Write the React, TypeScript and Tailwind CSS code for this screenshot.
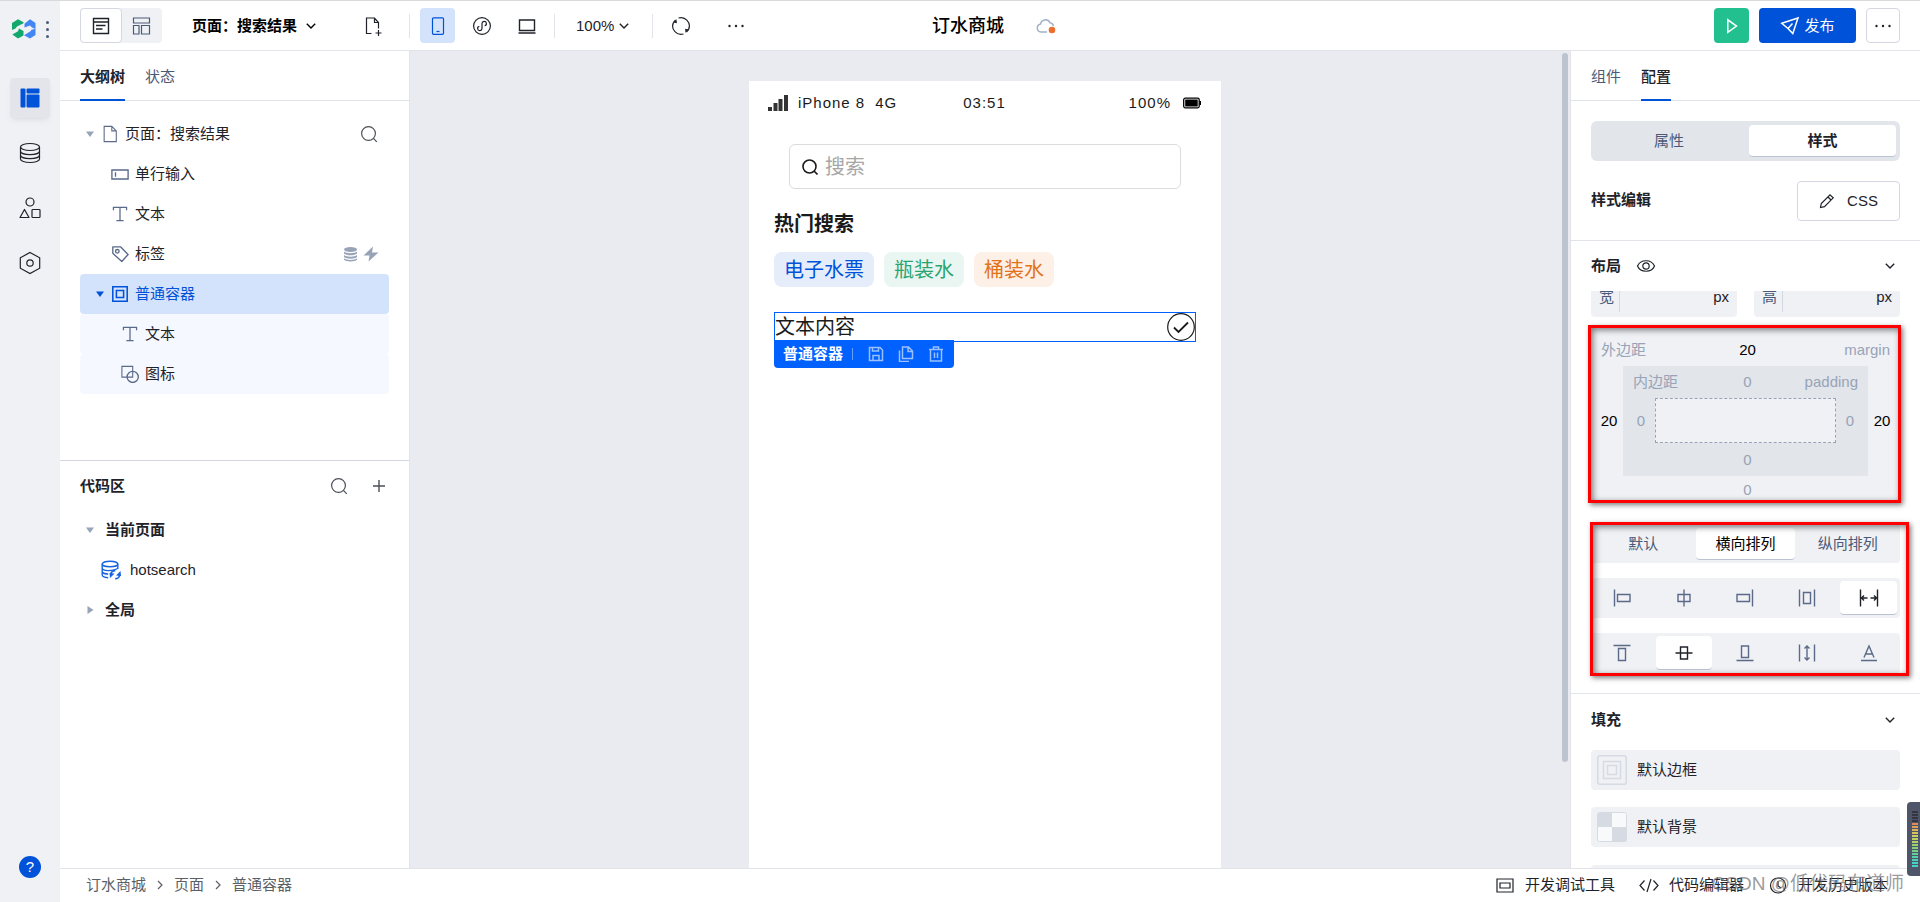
import type { ReactNode } from "react";
import { useState } from "react";

const fontStack =
  "font-['Liberation_Sans','Noto_Sans_CJK_SC',sans-serif] text-[15px] leading-5";
const iconButton = "flex items-center justify-center cursor-pointer";
const divider = "w-px h-6 bg-[#e2e4ea]";

type IconProps = { className?: string };

function Icon({
  className = "w-5 h-5",
  box = 20,
  children,
}: IconProps & { box?: number; children: ReactNode }) {
  return (
    <svg
      className={`shrink-0 ${className}`}
      viewBox={`0 0 ${box} ${box}`}
      fill="none"
      stroke="currentColor"
      strokeWidth="1.2"
      aria-hidden="true"
    >
      {children}
    </svg>
  );
}

const SearchIcon = ({ className }: IconProps) => (
  <Icon className={className}>
    <circle cx="9.5" cy="9.5" r="6.9" />
    <path d="M14.4 14.4l3.4 3.4" />
  </Icon>
);

const ChevronDown = () => (
  <Icon className="w-3 h-3" box={12}>
    <path d="M1.8 3.8L6 8l4.200-4.200" strokeWidth="1.4" />
  </Icon>
);

const ChevronRight = () => (
  <Icon className="w-3 h-3" box={12}>
    <path d="M4 2l4 4-4 4" />
  </Icon>
);

const DotsIcon = () => (
  <Icon>
    <g fill="currentColor" stroke="none">
      <circle cx="3.500" cy="10" r="1.200" />
      <circle cx="10" cy="10" r="1.200" />
      <circle cx="16.500" cy="10" r="1.200" />
    </g>
  </Icon>
);

const TextIcon = () => (
  <Icon>
    <path d="M2.700 5.800V2.600h14.600v3.200M10 2.600v14.800M6 17.400h8" strokeWidth="1.400" />
  </Icon>
);

const FileIcon = () => (
  <Icon>
    <path d="M3.500 1.500h8.500l5 5v12h-13.500zM12 1.500v5h5" />
  </Icon>
);

const InputIcon = () => (
  <Icon>
    <path d="M1 5.500h18v10H1zM5 8v5" strokeWidth="1.500" />
  </Icon>
);

const TagIcon = () => (
  <Icon>
    <path d="M2 2h8.500l8.500 8.500-7 7.800-10-9z" strokeLinejoin="round" strokeWidth="1.500" />
    <circle cx="7" cy="7" r="2" strokeWidth="1.500" />
  </Icon>
);

const BoxIcon = () => (
  <Icon>
    <path d="M2 2h16v16H2z" strokeWidth="1.700" />
    <path d="M6 6h8v8H6z" strokeWidth="1.700" />
  </Icon>
);

const ShapeIcon = () => (
  <Icon>
    <path d="M1 1.500h12v12H1z" />
    <circle cx="13" cy="13.200" r="6.200" strokeWidth="1.500" />
  </Icon>
);

const DatabaseIcon = ({ className }: IconProps) => (
  <Icon className={className} box={22}>
    <ellipse cx="11" cy="5" rx="9.500" ry="3.500" />
    <path d="M1.500 5v12c0 2 4.200 3.500 9.500 3.500s9.500-1.500 9.500-3.500V5" />
    <path d="M1.500 9.200c0 2 4.200 3.400 9.500 3.400s9.500-1.400 9.500-3.400M1.500 13.200c0 2 4.200 3.400 9.500 3.400s9.500-1.400 9.500-3.400" />
  </Icon>
);

function Caret({ open = true }: { open?: boolean }) {
  return (
    <svg className="w-2 h-2 fill-current" viewBox="0 0 8 8" aria-hidden="true">
      {open ? <path d="M0 1.500h8L4 7z" /> : <path d="M1.500 0v8L7.500 4z" />}
    </svg>
  );
}

function Logo() {
  return (
    <svg className="w-6 h-5" viewBox="0 0 24 20" aria-hidden="true">
      <path
        d="M0 4L6 .300l5.500 2.900v1L5 7.500 3.500 9.500 0 11zM.300 15.500L6 12.300 7 9.500l4.500 2.500v4.500L6 19.500z"
        fill="#12a86b"
      />
      <path
        d="M18 .200L23.500 4v6L20 8.500l-2-2-5.500 2V4.800zM12 16.300l6.500-4 1-1.500 4-1V16L18 19.500z"
        fill="#4285f4"
      />
    </svg>
  );
}

const navItems = [
  {
    label: "页面设计",
    icon: (
      <Icon className="w-5 h-5">
        <g fill="currentColor" stroke="none">
          <rect x=".500" y=".500" width="5" height="19" rx="1" />
          <rect x="6.500" y=".500" width="13" height="5" rx="1" />
          <rect x="6.500" y="6.500" width="13" height="13" rx="1" />
        </g>
      </Icon>
    ),
  },
  { label: "数据", icon: <DatabaseIcon className="w-[22px] h-[22px]" /> },
  {
    label: "组件库",
    icon: (
      <Icon className="w-[22px] h-[22px]" box={22}>
        <circle cx="11" cy="5" r="4" />
        <path d="M5.500 12.500l4.500 8H1z" strokeLinejoin="round" />
        <rect x="13" y="12.500" width="8" height="8" rx=".800" />
      </Icon>
    ),
  },
  {
    label: "设置",
    icon: (
      <Icon className="w-6 h-6" box={24}>
        <path d="M12 1.500l9.700 5.300v10.400L12 22.500l-9.700-5.300V6.800z" />
        <circle cx="12" cy="12" r="3.200" />
      </Icon>
    ),
  },
];

function Sidebar() {
  return (
    <nav className="w-[60px] shrink-0 bg-[#f0f1f5] flex flex-col items-center text-[#1f2329]">
      <div className="h-14 w-full flex items-center pl-3 gap-[6px]">
        <Logo />
        <button aria-label="菜单" className="flex flex-col gap-1 px-1">
          <span className="w-[3px] h-[3px] rounded-full bg-[#4a5a78]" />
          <span className="w-[3px] h-[3px] rounded-full bg-[#4a5a78]" />
          <span className="w-[3px] h-[3px] rounded-full bg-[#4a5a78]" />
        </button>
      </div>
      <div className="flex flex-col gap-[15px] mt-[21px]">
        {navItems.map((item, i) => (
          <button
            key={item.label}
            aria-label={item.label}
            className={
              i === 0
                ? "w-10 h-10 flex items-center justify-center rounded bg-[#e3e5ea] text-[#0052d9] shadow-md shadow-black/5"
                : "w-10 h-10 flex items-center justify-center rounded"
            }
          >
            {item.icon}
          </button>
        ))}
      </div>
      <button className="mt-auto mb-6 w-[22px] h-[22px] rounded-full bg-[#0052d9] text-white">
        ?
      </button>
    </nav>
  );
}

function Header() {
  return (
    <header className="h-[50px] shrink-0 px-5 flex items-center bg-white border-b border-[#e2e4ea] text-[#1f2329]">
      <div className="flex-1 flex items-center">
        <div className="flex rounded bg-[#f0f1f5] text-[#4a5a78]">
          <button
            aria-label="页面模式"
            className={`${iconButton} w-[42px] h-[35px] rounded bg-white border border-[#d5d8e2] text-[#1f2329]`}
          >
            <Icon>
              <path d="M2.500 2.500h15v15h-15zM2.500 6h15M5 9.500h9.500M5 13h6.500" strokeWidth="1.400" />
            </Icon>
          </button>
          <button aria-label="布局模式" className={`${iconButton} w-10 h-[35px]`}>
            <Icon>
              <path d="M1.500 2h16v5h-16zM1.500 9.500h5.500v8.500h-5.500zM9.500 9.500h8v8.500h-8z" />
            </Icon>
          </button>
        </div>
        <button className="ml-[30px] flex items-center gap-2 font-bold text-black">
          页面：搜索结果
          <ChevronDown />
        </button>
        <button aria-label="新建页面" className={`${iconButton} ml-[46px]`}>
          <Icon>
            <path d="M8.500 17.500H3.500v-15.500h8l4 4.500v6M11.500 2v4.500h4M15.500 14v6M12.500 17h6" />
          </Icon>
        </button>
        <span className={`${divider} ml-[26px]`} />
        <button
          aria-label="手机"
          className={`${iconButton} ml-[10px] w-[35px] h-[35px] rounded bg-[#d4e3fc] text-[#0052d9]`}
        >
          <Icon>
            <rect x="4.500" y="1.800" width="11" height="16.500" rx="1" />
            <path d="M8.500 15.500h3" />
          </Icon>
        </button>
        <button aria-label="小程序" className={`${iconButton} ml-[17px]`}>
          <Icon>
            <circle cx="10" cy="10" r="8.400" />
            <path d="M7.300 10.300a2.200 2.200 0 1 0 2.700 2.200V7.500a2.200 2.200 0 1 1 2.700 2.200" />
          </Icon>
        </button>
        <button aria-label="桌面" className={`${iconButton} ml-[25px]`}>
          <Icon>
            <path d="M2.500 4h15v10.500h-15zM1.500 17h17" strokeWidth="1.400" />
          </Icon>
        </button>
        <span className={`${divider} ml-[17px]`} />
        <button className="ml-[21px] flex items-center gap-1">
          100%
          <ChevronDown />
        </button>
        <span className={`${divider} ml-[22px]`} />
        <button aria-label="刷新" className={`${iconButton} ml-[18px]`}>
          <Icon>
            <path d="M7.500 2a8.400 8.400 0 0 1 10.300 11M12.500 18A8.400 8.400 0 0 1 2.200 7M4.500 4A8.400 8.400 0 0 0 1.600 10M15.500 16A8.400 8.400 0 0 0 18.400 10" />
            <path d="M5.500 3.200l.400 4-3.800-.800zM14.500 16.800l-.400-4 3.800.800z" fill="currentColor" stroke="none" />
          </Icon>
        </button>
        <button aria-label="更多操作" className={`${iconButton} ml-[35px]`}>
          <DotsIcon />
        </button>
      </div>
      <div className="flex items-center gap-8 pl-2">
        <h1 className="text-lg font-medium text-black">订水商城</h1>
        <svg className="w-5 h-5" viewBox="0 0 20 20" fill="none" aria-hidden="true">
          <path
            d="M11 16H5a4 4 0 0 1-.500-7.900 5 5 0 0 1 9.500-1.300 4 4 0 0 1 3.500 3.200"
            stroke="#a3b1c6"
            strokeWidth="1.500"
          />
          <circle cx="16" cy="14" r="3.300" fill="#ed6f2f" />
        </svg>
      </div>
      <div className="flex-1 flex items-center justify-end gap-[10px]">
        <button
          aria-label="预览"
          className={`${iconButton} w-[35px] h-[35px] rounded bg-[#22c08e] text-white`}
        >
          <Icon>
            <path d="M5.800 3.800v12.600l8.700-6.300z" strokeWidth="1.500" />
          </Icon>
        </button>
        <button className={`${iconButton} gap-1 w-[97px] h-[35px] rounded bg-[#0052d9] text-white`}>
          <Icon>
            <path d="M1.800 7.200L18 2l-5.200 15.500L8 12.500zM8 12.500l4.500-5" strokeWidth="1.500" />
          </Icon>
          发布
        </button>
        <button
          aria-label="更多"
          className={`${iconButton} w-[34px] h-[35px] rounded border border-[#d5d8e2]`}
        >
          <DotsIcon />
        </button>
      </div>
    </header>
  );
}

type Row = {
  label: string;
  level: number;
  icon: ReactNode;
  open?: boolean;
  state?: "selected" | "child";
  tail?: ReactNode;
};

const rows: Row[] = [
  {
    label: "页面：搜索结果",
    level: 0,
    icon: <FileIcon />,
    open: true,
    tail: (
      <button aria-label="搜索组件" className="text-[#4b4f57] mr-[10px]">
        <SearchIcon className="w-5 h-5" />
      </button>
    ),
  },
  { label: "单行输入", level: 1, icon: <InputIcon /> },
  { label: "文本", level: 1, icon: <TextIcon /> },
  {
    label: "标签",
    level: 1,
    icon: <TagIcon />,
    tail: (
      <span className="flex gap-[5px] mr-[10px] text-[#97a3b7]">
        <svg className="w-[15px] h-4 fill-current" viewBox="0 0 15 16" aria-hidden="true">
          <ellipse cx="7.500" cy="3.500" rx="6.500" ry="2.500" />
          <path d="M1 5.500c2 2.200 11 2.200 13 0v2c-2 2.300-11 2.300-13 0zM1 9c2 2.200 11 2.200 13 0v2c-2 2.300-11 2.300-13 0zM1 12.300c2 2.200 11 2.200 13 0v1.500c-2 2.200-11 2.200-13 0z" />
        </svg>
        <svg className="w-4 h-4 fill-current" viewBox="0 0 16 16" aria-hidden="true">
          <path d="M10 .500L.500 9.500H6.500L5.500 15.500 15.500 6.500H9z" />
        </svg>
      </span>
    ),
  },
  { label: "普通容器", level: 1, icon: <BoxIcon />, open: true, state: "selected" },
  { label: "文本", level: 2, icon: <TextIcon />, state: "child" },
  { label: "图标", level: 2, icon: <ShapeIcon />, state: "child" },
];

const indent = ["pl-0", "pl-[10px]", "pl-5"];
const rowColor = {
  selected: "bg-[#d4e3fc] text-[#0052d9]",
  child: "bg-[#f5f8ff] text-[#1f2329]",
  plain: "text-[#1f2329]",
};

function TreeRow({ row }: { row: Row }) {
  const tint = row.state === "selected" ? "text-[#0052d9]" : "text-[#5a6a88]";
  return (
    <li
      className={`h-10 flex items-center rounded ${indent[row.level]} ${rowColor[row.state ?? "plain"]}`}
    >
      <span
        className={`w-5 flex justify-center ${row.state === "selected" ? "" : "text-[#97a3b7]"}`}
      >
        {row.open && <Caret />}
      </span>
      <span className={tint}>
        <span className="block scale-90">{row.icon}</span>
      </span>
      <span className="flex-1 pl-[5px]">{row.label}</span>
      {row.tail}
    </li>
  );
}

function LeftPanel() {
  return (
    <aside className="w-[350px] shrink-0 flex flex-col bg-white border-r border-[#e2e4ea]">
      <div className="h-[50px] shrink-0 flex items-stretch gap-5 px-5 border-b border-[#e2e4ea]">
        <button className="pt-1 font-bold text-[#1f2329] border-b-2 border-[#0052d9] -mb-px">
          大纲树
        </button>
        <button className="pt-[3px] text-[#4a5a78]">状态</button>
      </div>
      <ul className="h-[359px] shrink-0 px-5 pt-[13px]">
        {rows.map((row, i) => (
          <TreeRow key={i} row={row} />
        ))}
      </ul>
      <section className="flex-1 border-t border-[#d5d8e2] px-5 text-[#1f2329]">
        <div className="h-[49px] flex items-center">
          <h2 className="flex-1 font-bold">代码区</h2>
          <button aria-label="搜索代码" className="text-[#4b4f57] mr-5">
            <SearchIcon className="w-5 h-5" />
          </button>
          <button aria-label="新增" className="text-[#4b4f57]">
            <Icon>
              <path d="M10 4v12M4 10h12" strokeWidth="1.400" />
            </Icon>
          </button>
        </div>
        <ul>
          <li className="h-10 flex items-center font-bold">
            <span className="w-[25px] pl-[6px] text-[#97a3b7]">
              <Caret />
            </span>
            当前页面
          </li>
          <li className="h-10 flex items-center gap-[9px] pl-[21px]">
            <svg
              className="w-5 h-5 text-[#1664e0]"
              viewBox="0 0 20 20"
              fill="none"
              stroke="currentColor"
              strokeWidth="1.400"
              aria-hidden="true"
            >
              <ellipse cx="9" cy="4" rx="7.800" ry="2.800" />
              <path d="M1.200 4v11c0 1.500 2.500 2.500 6 2.800M16.800 4v5M1.200 8c0 3.200 10 3.500 15.500.500M1.200 12c1 1.500 3.500 2 6 2" />
              <path d="M9.800 14.500a4.300 4.300 0 0 1 4.500-4M18.700 14.700a4.300 4.300 0 0 1-4.500 4" strokeWidth="1.800" />
              <path d="M8.500 13l5 .500-4.500 4.500zM20 16l-5-.500L19.500 11z" fill="currentColor" stroke="none" />
            </svg>
            hotsearch
          </li>
          <li className="h-10 flex items-center font-bold">
            <span className="w-[25px] pl-[6px] text-[#97a3b7]">
              <Caret open={false} />
            </span>
            全局
          </li>
        </ul>
      </section>
    </aside>
  );
}

const tags = [
  { label: "电子水票", color: "bg-[#e5edfb] text-[#0052d9]" },
  { label: "瓶装水", color: "bg-[#e9f6f1] text-[#2ba471]" },
  { label: "桶装水", color: "bg-[#fcf0e7] text-[#e37318]" },
];

function Phone() {
  return (
    <div className="w-[472px] bg-white text-[#1a1a1a]">
      <div className="h-[43px] pl-[19px] pr-5 grid grid-cols-3 items-center tracking-[1px]">
        <div className="flex items-center gap-[10px]">
          <svg className="w-5 h-4 fill-[#333]" viewBox="0 0 20 16" aria-hidden="true">
            <path d="M0 12h4v4H0zM5.500 8h4v8h-4zM10.500 4h4v12h-4zM16 0h4v16h-4z" />
          </svg>
          <span>iPhone 8</span>
          <span>4G</span>
        </div>
        <span className="text-center">03:51</span>
        <div className="flex items-center justify-end gap-3">
          100%
          <svg className="w-[18px] h-3" viewBox="0 0 18 12" aria-hidden="true">
            <rect x=".700" y="1.200" width="15.500" height="9.600" rx="1.500" fill="none" stroke="#000" strokeWidth="1.300" />
            <rect x="2.200" y="2.500" width="12.500" height="7" />
            <path d="M16.500 4h1.500v4h-1.500z" />
          </svg>
        </div>
      </div>
      <div className="px-10 pt-5">
        <label className="h-[45px] flex items-center gap-[7px] px-3 rounded-md border border-[#dcdcdc]">
          <Icon className="w-4 h-4" box={16}>
            <circle cx="7.500" cy="7.500" r="6.500" strokeWidth="1.600" />
            <path d="M12 12l3.500 3.500" strokeWidth="1.600" />
          </Icon>
          <input
            type="text"
            aria-label="搜索"
            placeholder="搜索"
            className="flex-1 min-w-0 text-xl outline-none placeholder:text-[#a6a6a6]"
          />
        </label>
      </div>
      <div className="px-[25px] text-xl leading-7">
        <h2 className="mt-[21px] font-bold">热门搜索</h2>
        <div className="mt-[14px] flex gap-[10px]">
          {tags.map((tag) => (
            <span
              key={tag.label}
              className={`h-[35px] flex items-center px-[10px] rounded-lg ${tag.color}`}
            >
              {tag.label}
            </span>
          ))}
        </div>
        <div className="relative mt-[25px] h-[30px] flex items-center justify-between border border-[#0061ff]">
          文本内容
          <Icon className="w-7 h-7" box={28}>
            <circle cx="14" cy="14" r="13.300" />
            <path d="M7 14.500l4.500 4.500 9.500-9.500" strokeWidth="1.800" />
          </Icon>
          {/* Selection toolbar */}
          <div className="absolute -left-px top-[27px] w-[180px] h-7 flex items-center gap-[15px] pl-[9px] rounded-b bg-[#0061ff] text-[15px] leading-5 font-bold text-white">
            <span className="flex items-center gap-[9px]">
              普通容器
              <span className="w-px h-3 bg-white/40" />
            </span>
            <span className="flex gap-[14px] text-white/60">
              <button aria-label="保存">
                <Icon className="w-4 h-4" box={16}>
                  <path d="M1.500 1.500h10.500l2.500 2.500v10.500h-13zM4.500 1.500v3.500h6v-3.500M5 14.500v-5h6v5" strokeWidth="1.500" />
                </Icon>
              </button>
              <button aria-label="复制">
                <Icon className="w-4 h-4" box={16}>
                  <path d="M4.500 1h6l4 4v7.500h-10zM10 1v4.500h4.500M1.500 4.500v11h9.500" strokeWidth="1.500" />
                </Icon>
              </button>
              <button aria-label="删除">
                <Icon className="w-4 h-4" box={16}>
                  <path d="M1 3.500h14M5.500 3V1h5v2M2.500 3.500v11.500h11v-11.500M6.500 6.500v5.500M9.500 6.500v5.500" strokeWidth="1.500" />
                </Icon>
              </button>
            </span>
          </div>
        </div>
      </div>
    </div>
  );
}

/* Red callout frame laid over a block */
function Callout({ className }: IconProps) {
  return (
    <div
      className={`absolute pointer-events-none border-[3px] border-[#ff0000] shadow-[2px_2px_5px_rgba(0,0,0,0.5),inset_2px_2px_6px_rgba(0,0,0,0.5)] ${className}`}
    />
  );
}

function SizeField({ label }: { label: string }) {
  return (
    <label className="h-10 flex-1 min-w-0 flex items-center rounded bg-[#f0f1f5] px-2 text-[#1f2329]">
      <span className="pr-1 text-[#4a5a78]">{label}</span>
      <input type="text" className="flex-1 min-w-0 w-0 h-[30px] ml-px pl-2 border-l border-[#d5d8e2] outline-none" />
      px
    </label>
  );
}

const numPad = { start: "pl-1", end: "pr-1" };

function Num({
  value,
  label,
  side = "start",
}: {
  value: string;
  label: string;
  side?: "start" | "end";
}) {
  return (
    <input
      type="text"
      aria-label={label}
      defaultValue={value}
      className={`w-8 text-center outline-none ${numPad[side]} ${value === "0" ? "text-[#97a3b7]" : "text-black"}`}
    />
  );
}

function SpacingEditor() {
  return (
    <div className="relative mt-[11px] h-[172px] bg-[#f0f1f5] text-[#97a3b7] flex flex-col">
      <div className="h-[38px] shrink-0 grid grid-cols-3 items-center px-[10px] pt-[6px]">
        <span>外边距</span>
        <span className="text-center">
          <Num value="20" label="上外边距" />
        </span>
        <span className="text-right">margin</span>
      </div>
      <div className="flex items-center">
        <Num value="20" label="左外边距" />
        <div className="flex-1 h-[110px] bg-[#e2e5ea] flex flex-col">
          <div className="h-8 grid grid-cols-3 items-center px-[10px]">
            <span>内边距</span>
            <span className="text-center">
              <Num value="0" label="上内边距" />
            </span>
            <span className="text-right">padding</span>
          </div>
          <div className="flex items-center">
            <Num value="0" label="左内边距" />
            <div className="flex-1 h-[45px] border border-dashed border-[#97a3b7] bg-[#f0f1f5]" />
            <Num value="0" label="右内边距" side="end" />
          </div>
          <div className="flex-1 flex items-center justify-center">
            <Num value="0" label="下内边距" />
          </div>
        </div>
        <Num value="20" label="右外边距" side="end" />
      </div>
      <div className="flex-1 flex items-end justify-center">
        <Num value="0" label="下外边距" />
      </div>
      <Callout className="-inset-y-[3px] -left-[3px] -right-px" />
    </div>
  );
}

const justifyIcons = [
  { label: "左对齐", d: "M2.500 1.500v17M5.500 6.500h12.500v7h-12.500z" },
  { label: "居中", d: "M10 1.500v17M4 6.500h12v7h-12z" },
  { label: "右对齐", d: "M17.500 1.500v17M2 6.500h12.500v7h-12.500z" },
  { label: "平均分布", d: "M2.500 1.500v17M17.500 1.500v17M6.500 4.500h7v11h-7z" },
  {
    label: "两端对齐",
    d: "M1.500 1.500v17M18.500 1.500v17M2.500 10h6M5 7.500L2.500 10l2.500 2.500M17.500 10h-6M15 7.500l2.500 2.500-2.500 2.500",
  },
];

const alignIcons = [
  { label: "顶部对齐", d: "M1.500 2.500h17M6.500 5.500h7v12h-7z" },
  { label: "垂直居中", d: "M1.500 10h17M6.500 4h7v12h-7z" },
  { label: "底部对齐", d: "M1.500 17.500h17M6.500 3h7v11.500h-7z" },
  {
    label: "拉伸",
    d: "M2.500 1.500v17M17.500 1.500v17M10 3v14M7.500 5.500L10 3l2.500 2.500M7.500 14.500L10 17l2.500-2.500",
  },
  { label: "基线对齐", d: "M2 17.500h16M5 14.500L10 3l5 11.500M6.500 11h7" },
];

function IconSegment({
  items,
  initial,
}: {
  items: { label: string; d: string }[];
  initial: number;
}) {
  const [active, setActive] = useState(initial);
  return (
    <div className="h-10 mt-[15px] p-[3px] grid grid-cols-5 gap-[5px] rounded bg-[#f0f1f5]">
      {items.map((item, i) => (
        <button
          key={item.label}
          aria-label={item.label}
          onClick={() => setActive(i)}
          className={
            i === active
              ? "flex items-center justify-center rounded bg-white text-[#1f2329] border-b border-[#b9c3d3]"
              : "flex items-center justify-center rounded text-[#5a6a88]"
          }
        >
          <svg
            className="w-5 h-5"
            viewBox="0 0 20 20"
            fill="none"
            stroke="currentColor"
            strokeWidth="1.400"
            aria-hidden="true"
          >
            <path d={item.d} />
          </svg>
        </button>
      ))}
    </div>
  );
}

function RightPanel() {
  return (
    <aside className="w-[350px] shrink-0 flex flex-col bg-white border-l border-[#e2e4ea] text-[#1f2329]">
      <div className="h-[50px] shrink-0 flex items-stretch gap-5 px-5 border-b border-[#e2e4ea]">
        <button className="pt-[3px] text-[#4a5a78]">组件</button>
        <button className="pt-1 font-medium border-b-2 border-[#0052d9] -mb-px">配置</button>
      </div>
      <div className="h-[140px] shrink-0 px-5 pt-5 border-b border-[#e2e4ea]">
        <div className="h-10 p-1 flex rounded-md bg-[#e2e5ea]">
          <button className="flex-1 pr-[6px] text-[#4a5a78]">属性</button>
          <button className="w-[147px] rounded bg-white font-bold border-b border-[#b9c3d3]">
            样式
          </button>
        </div>
        <div className="mt-5 flex items-start justify-between">
          <h2 className="pt-[9px] font-bold">样式编辑</h2>
          <button className="w-[103px] h-10 flex items-center justify-center gap-3 rounded border border-[#d5d8e2]">
            <Icon className="w-4 h-4" box={16}>
              <path d="M1.500 14.500l.800-4L11 1.800l3.200 3L5.500 13.600zM9 4l3 3" />
            </Icon>
            CSS
          </button>
        </div>
      </div>
      <div className="h-[50px] shrink-0 px-5 flex items-center">
        <h2 className="font-bold">布局</h2>
        <Icon className="w-5 h-5 ml-[15px]">
          <path d="M1.500 10c3-7 14-7 17 0-3 7-14 7-17 0z" />
          <circle cx="10" cy="10" r="3.200" />
        </Icon>
        <button aria-label="收起布局" className="ml-auto mr-1">
          <ChevronDown />
        </button>
      </div>
      <div className="flex-1 min-h-0 overflow-hidden">
        <div className="-mt-[14px] px-5">
          <div className="flex gap-[17px]">
            <SizeField label="宽" />
            <SizeField label="高" />
          </div>
          <SpacingEditor />
          <div className="relative mt-[25px]">
            <div className="h-[38px] p-[3px] grid grid-cols-3 gap-1 rounded-b bg-[#f0f1f5] text-[#4a5a78]">
              <button>默认</button>
              <button className="rounded bg-white text-black border-b border-[#b9c3d3]">
                横向排列
              </button>
              <button>纵向排列</button>
            </div>
            <IconSegment items={justifyIcons} initial={4} />
            <IconSegment items={alignIcons} initial={1} />
            <Callout className="-inset-y-[3px] -left-px -right-[9px]" />
          </div>
        </div>
        <section className="mt-5 px-5 border-t border-[#e2e4ea]">
          <div className="h-14 flex items-center justify-between pb-1">
            <h2 className="font-bold">填充</h2>
            <button aria-label="收起填充" className="mr-1">
              <ChevronDown />
            </button>
          </div>
          <button className="w-full h-10 flex items-center gap-[10px] px-[6px] rounded bg-[#f0f1f5]">
            <svg
              className="w-[30px] h-[30px]"
              viewBox="0 0 30 30"
              fill="none"
              stroke="#d5dae3"
              strokeWidth="1.500"
              aria-hidden="true"
            >
              <rect x=".800" y=".800" width="28.400" height="28.400" rx="2" />
              <path d="M6.500 6.500h17v17h-17zM10.500 10.500h9v9h-9z" />
            </svg>
            默认边框
          </button>
          <button className="w-full h-10 mt-[17px] flex items-center gap-[10px] px-[6px] rounded bg-[#f0f1f5]">
            <svg className="w-[30px] h-[30px]" viewBox="0 0 30 30" aria-hidden="true">
              <rect x=".500" y=".500" width="29" height="29" rx="2" fill="#f8f9fb" stroke="#d5dae3" />
              <path d="M1 1h14v14H1zM15 15h14v14H15z" fill="#d5dae3" />
            </svg>
            默认背景
          </button>
          <div className="h-10 mt-[18px] rounded bg-[#f0f1f5]" />
        </section>
      </div>
    </aside>
  );
}

function Footer() {
  return (
    <footer className="h-[34px] shrink-0 pl-[26px] pr-8 pb-px flex items-center bg-white border-t border-[#e2e4ea] text-[#1f2329]">
      <div className="flex-1 flex items-center gap-2 text-[#5c5f66]">
        <a href="#app">订水商城</a>
        <ChevronRight />
        <a href="#page">页面</a>
        <ChevronRight />
        <a href="#container">普通容器</a>
      </div>
      <button className="flex items-center gap-[10px]">
        <Icon>
          <path d="M2 4h16v13h-16zM5 8h10v5h-10z" />
        </Icon>
        开发调试工具
      </button>
      <button className="ml-6 flex items-center gap-[10px]">
        <Icon>
          <path d="M5.500 5.500L1 10.500l4.500 5M14.500 5.500l4.500 5-4.500 5M12 4L8 17" />
        </Icon>
        代码编辑器
      </button>
      <button className="ml-6 flex items-center gap-[10px]">
        <Icon>
          <circle cx="10" cy="10.500" r="7.500" />
          <path d="M10 6v5l3 2" />
        </Icon>
        开发历史版本
      </button>
    </footer>
  );
}

const levels = [
  "bg-[#33363f]",
  "bg-[#33363f]",
  "bg-[#33363f]",
  "bg-[#33363f]",
  "bg-[#e08a5a]",
  "bg-[#e0a05a]",
  "bg-[#dbb25c]",
  "bg-[#d6c35e]",
  "bg-[#cdd060]",
  "bg-[#bfd162]",
  "bg-[#aed066]",
  "bg-[#9bcf6e]",
  "bg-[#88cf7a]",
  "bg-[#74cf8a]",
  "bg-[#62cf9a]",
  "bg-[#54cfaa]",
  "bg-[#4ad0b8]",
  "bg-[#44d4c4]",
  "bg-[#44d4c4]",
];

export default function App() {
  return (
    <div
      className={`${fontStack} relative h-screen flex overflow-hidden border-t border-[#d9d9d9] bg-white`}
    >
      <Sidebar />
      <div className="flex-1 min-w-0 flex flex-col">
        <Header />
        <div className="flex-1 min-h-0 flex">
          <LeftPanel />
          <main className="flex-1 min-w-0 flex bg-[#eaebf0] overflow-hidden">
            <div className="flex-1 flex justify-center pt-[30px] pr-[2px]">
              <Phone />
            </div>
            <div className="w-2 pt-[2px]">
              <div className="w-[6px] h-[87%] rounded-full bg-[#bcc4d0]" />
            </div>
          </main>
          <RightPanel />
        </div>
        <Footer />
      </div>

      {/* Watermark and floating level meter */}
      <div className="absolute right-4 bottom-1 text-[19px] leading-7 text-[#6f6f6f]/70 pointer-events-none">
        CSDN @低代码布道师
      </div>
      <div className="absolute right-0 bottom-[26px] w-[13px] h-[74px] rounded-l bg-[#50566a] flex flex-col items-end justify-center gap-px pr-[2px]">
        {levels.map((color, i) => (
          <span key={i} className={`w-[6px] h-[2px] ${color}`} />
        ))}
      </div>
    </div>
  );
}
